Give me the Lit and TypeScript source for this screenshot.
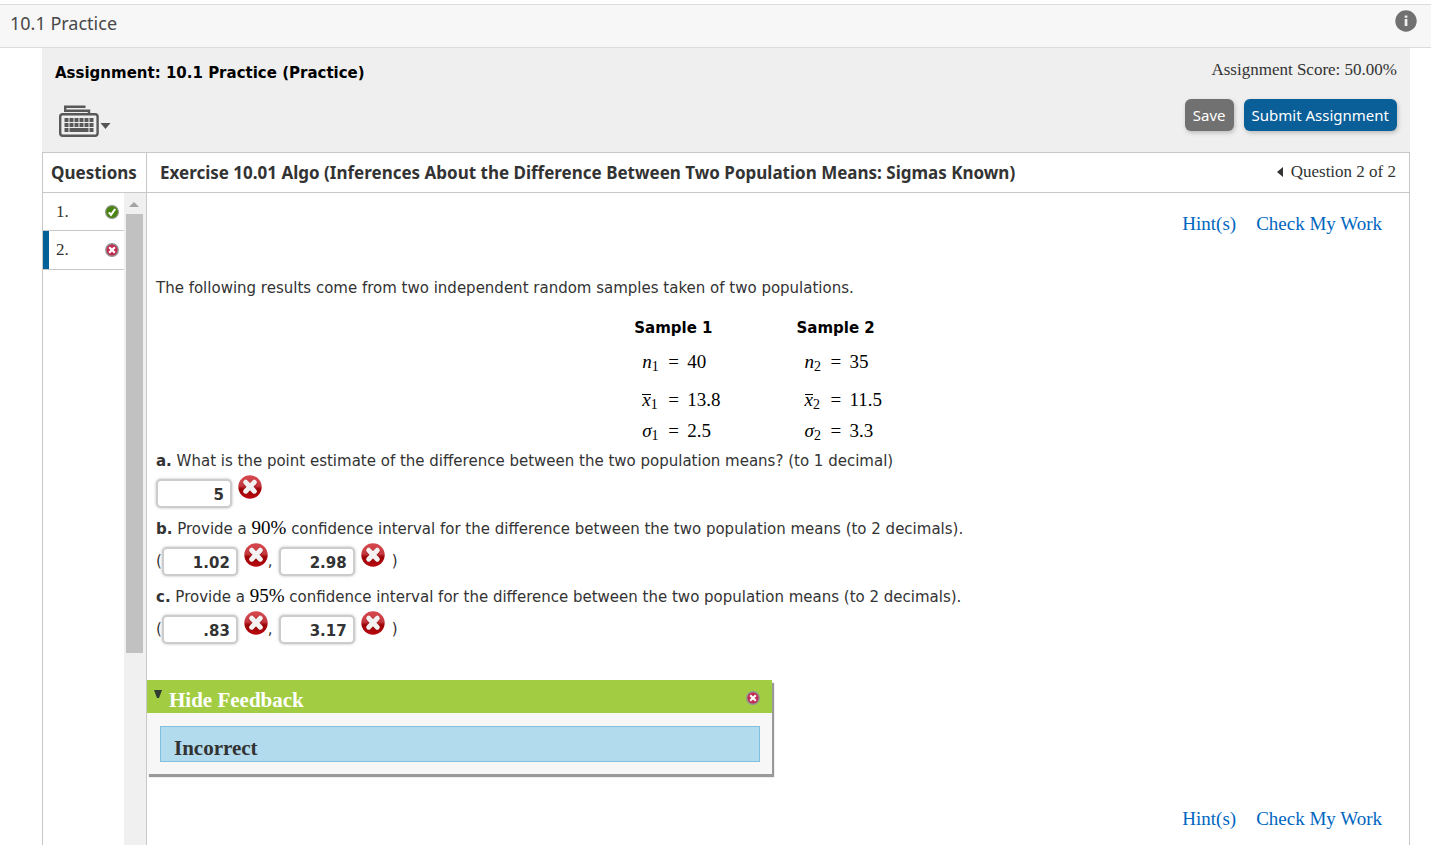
import { LitElement, html, css, svg } from "lit";
import { customElement, property } from "lit/decorators.js";

const SERIF = css`"Liberation Serif", "Times New Roman", serif`;
const SANS = css`"Open Sans", "Noto Sans", sans-serif`;
const TITLE = css`"Noto Sans", "Open Sans", sans-serif`;
const WIDE = css`Verdana, "DejaVu Sans", sans-serif`;

@customElement("status-mark")
class StatusMark extends LitElement {
  @property() kind = "wrong";
  static styles = css`
    :host { display: block; line-height: 0; }
    .small { width: 14px; height: 14px; }
    .large { width: 24px; height: 24px; }
  `;
  render() {
    if (this.kind === "right") {
      return html`<svg class="small" viewBox="0 0 14 14" role="img" aria-label="Correct">
        <circle cx="7" cy="7" r="6.4" fill="#4a8410" stroke="#8b9484" stroke-width="1.1" />
        <path d="M3.8 7.4 6 9.8 10.2 4" fill="none" stroke="#fff" stroke-width="2.1" />
      </svg>`;
    }
    if (this.kind === "small") {
      return html`<svg class="small" viewBox="0 0 14 14" role="img" aria-label="Incorrect">
        <circle cx="7" cy="7" r="6.2" fill="#c22c50" stroke="#929292" stroke-width="1.4" />
        <path d="M4.2 4.2l5.6 5.6M9.8 4.2l-5.6 5.6" stroke="#fff" stroke-width="2.2" />
      </svg>`;
    }
    return html`<svg class="large" viewBox="0 0 24 24" role="img" aria-label="Incorrect">
      <defs>
        <linearGradient id="g" x1="0" y1="0" x2="0" y2="1">
          <stop offset="0" stop-color="#d8484e" />
          <stop offset="0.45" stop-color="#c43a40" />
          <stop offset="0.58" stop-color="#9c0206" />
          <stop offset="1" stop-color="#b80a10" />
        </linearGradient>
      </defs>
      <circle cx="12" cy="12" r="11.7" fill="url(#g)" />
      <path d="M8 8l8 8M16 8l-8 8" stroke="#7d0206" stroke-opacity="0.35" stroke-width="6.4" stroke-linecap="round" />
      <path d="M7.7 7.2l8.6 9M16.3 7.2l-8.6 9" stroke="#f3f1f1" stroke-width="5" stroke-linecap="round" />
    </svg>`;
  }
}

@customElement("answer-box")
class AnswerBox extends LitElement {
  @property() value = "";
  @property() label = "";
  static styles = css`
    :host { display: flex; align-items: flex-start; gap: 6px; }
    .box {
      box-sizing: border-box;
      width: 76px;
      height: 29px;
      margin: 4px 0 0;
      padding: 2px 6px 0 4px;
      border: 2px solid #ccc;
      border-radius: 5px;
      box-shadow: 0 0 3px #bbb;
      background: #fff;
      color: #333;
      font: bold 15px ${WIDE};
      text-align: right;
    }
  `;
  render() {
    return html`<input class="box" type="text" aria-label=${this.label} .value=${this.value} />
      <status-mark kind="wrong"></status-mark>`;
  }
}

interface Stat { name: string; sub: string; value: string; bar?: boolean; }

@customElement("app-root")
class AppRoot extends LitElement {
  private rows: Stat[][] = [
    [{ name: "n", sub: "1", value: "40" }, { name: "n", sub: "2", value: "35" }],
    [{ name: "x", sub: "1", value: "13.8", bar: true }, { name: "x", sub: "2", value: "11.5", bar: true }],
    [{ name: "σ", sub: "1", value: "2.5" }, { name: "σ", sub: "2", value: "3.3" }],
  ];

  static styles = css`
    :host {
      display: flex;
      flex-direction: column;
      height: 100vh;
      overflow: hidden;
      background: #fff;
      color: #333;
      font-family: ${WIDE};
    }
    h1, h2, h3, p { margin: 0; font-weight: normal; }
    a { text-decoration: none; }
    .topbar {
      display: flex;
      flex: none;
      justify-content: space-between;
      align-items: flex-start;
      box-sizing: border-box;
      height: 44px;
      margin-top: 4px;
      padding: 5px 14px 0 10px;
      border: solid #dcdcdc;
      border-width: 1px 0;
      background: #f7f7f7;
    }
    .topbar h1 { font: 18px/26px ${TITLE}; color: #484848; }
    .info, .keys { padding: 0; border: 0; background: none; line-height: 0; }
    .info svg { width: 22px; height: 22px; }
    .panel {
      display: flex;
      flex: 1;
      flex-direction: column;
      min-height: 0;
      margin: 0 21px 0 42px;
    }
    .head {
      display: flex;
      flex: none;
      justify-content: space-between;
      box-sizing: border-box;
      height: 104px;
      padding: 12px 13px;
      background: #efefef;
    }
    .head h2 { font: bold 15px/26px ${WIDE}; color: #000; }
    .keys { display: flex; align-items: center; margin: 19px 0 0 4px; }
    .keys .board { width: 40px; height: 32px; }
    .keys .caret { width: 11px; height: 6px; margin: 9px 0 0 1px; }
    .side { display: flex; flex-direction: column; align-items: flex-end; gap: 19px; }
    .score { font: 17px/20px ${SERIF}; }
    .buttons { display: flex; gap: 10px; }
    .btn {
      height: 32px;
      padding: 0 8px;
      border: 0;
      border-radius: 6px;
      background: #0a5f99;
      box-shadow: 1px 2px 4px #bbb;
      color: #fff;
      font: 15px/32px ${TITLE};
    }
    .btn.grey { background: #717171; }
    .titles {
      display: flex;
      flex: none;
      box-sizing: border-box;
      height: 41px;
      border: 1px solid #c8c8c8;
    }
    .titles h3 { font: bold 17px/40px ${TITLE}; }
    .titles .qs { box-sizing: border-box; width: 104px; padding-left: 8px; border-right: 1px solid #c8c8c8; }
    .titles .name { flex: 1; padding-left: 13px; white-space: nowrap; }
    .pager { display: flex; align-items: center; gap: 8px; height: 38px; padding-right: 13px; font: 17px/38px ${SERIF}; }
    .pager button { padding: 0; border: 0; background: none; line-height: 0; }
    .pager svg { width: 6px; height: 10px; }
    .body { display: flex; flex: 1; min-height: 0; border: solid #c8c8c8; border-width: 0 1px; }
    .nav { display: flex; flex: none; box-sizing: border-box; width: 104px; border-right: 1px solid #c8c8c8; }
    .list { flex: 1; margin: 0; padding: 0; list-style: none; }
    .list a {
      display: flex;
      align-items: center;
      justify-content: space-between;
      box-sizing: border-box;
      height: 37px;
      padding: 0 5px 0 7px;
      border-left: 6px solid transparent;
      color: #333;
      font: 17px/38px ${SERIF};
    }
    .list li { border-bottom: 1px solid #c8c8c8; }
    .list .current { height: 38px; border-left-color: #006097; }
    .scroll { width: 22px; background: #f0f0f0; }
    .scroll svg { display: block; width: 10px; height: 5px; margin: 9px 0 7px 5px; }
    .thumb { width: 17px; height: 52vh; margin-left: 2px; background: #c1c1c1; }
    .content { flex: 1; min-width: 0; overflow: hidden; }
    .help { display: flex; justify-content: flex-end; gap: 20px; padding: 0 27px; font: 19px/24px ${SERIF}; }
    .help a { color: #0066bf; }
    .help.top { padding-top: 19px; }
    .help.bottom { padding-top: 33px; }
    .task { padding: 41px 9px 0; font-size: 15px; line-height: 22px; white-space: nowrap; }
    .data { margin: 18px auto 0; border-collapse: collapse; color: #000; }
    .data th { padding: 0 84px 0 0; text-align: left; font-size: 15px; line-height: 22px; }
    .data th + th { padding-right: 47px; }
    .data td { height: 31px; padding: 0 0 0 8px; font: 19px/31px ${SERIF}; vertical-align: bottom; }
    .data .tall td { height: 38px; }
    .stat { display: flex; }
    .sym { width: 26px; }
    .eq { width: 19px; }
    .sym i { display: inline-block; line-height: 10px; }
    .sym i.bar { border-top: 1px solid #000; }
    .sym small { display: inline-block; font-size: 14px; line-height: 8px; vertical-align: -3px; }
    .math { color: #000; font: 19px/20px ${SERIF}; }
    .part { height: 22px; margin-top: 4px; line-height: 22px; }
    .answers { display: flex; box-sizing: border-box; height: 42px; padding-top: 3px; }
    .answers .sign { padding-top: 7px; line-height: 22px; }
    .answers .sign + .next, .answers .next { margin-left: 6px; }
    .answers .close { padding-left: 7px; }
    .feedback {
      max-width: 625px;
      margin-top: 30px;
      background: #f7f7f7;
      box-shadow: 2px 3px 1px #999;
    }
    .bar-head {
      display: flex;
      align-items: center;
      box-sizing: border-box;
      height: 33px;
      padding: 2px 12px 0 7px;
      background: #a2cd42;
    }
    .toggle {
      display: flex;
      flex: 1;
      gap: 7px;
      padding: 5px 0 0;
      border: 0;
      background: none;
      color: #fff;
      font: bold 21px/26px ${SERIF};
      text-align: left;
    }
    .toggle svg { width: 8px; height: 8px; margin-top: 3px; }
    .result {
      margin: 0 12px 0 13px;
      padding: 8px 12px 0 13px;
      border: 1px solid #7fbfe0;
      background: #b2dbed;
      font: bold 21px/26px ${SERIF};
    }
    .bar-body { padding: 13px 0 12px; }
  `;

  private keyboard() {
    const keys = [];
    for (let r = 0; r < 3; r++) {
      for (let c = 0; c < 6; c++) {
        if (r === 2 && c > 0 && c < 5) continue;
        keys.push(svg`<rect x=${5.5 + c * 5} y=${13 + r * 5} width="4" height="4" />`);
      }
    }
    return html`<svg class="board" viewBox="0 0 40 32" fill="#595959" aria-hidden="true">
      <path d="M26.5 1.8H6.2V5.8H30V9" fill="none" stroke="#595959" stroke-width="2.4" />
      <rect x="1.2" y="9.2" width="37.4" height="21.6" rx="2.5" fill="none" stroke="#595959" stroke-width="2.4" />
      ${keys}
      <rect x="10.5" y="23" width="19" height="4" />
    </svg>`;
  }

  private stat(s: Stat) {
    return html`<td><span class="stat"><span class="sym"><i class=${s.bar ? "bar" : ""}>${s.name}</i><small>${s.sub}</small></span><span class="eq">=</span><span>${s.value}</span></span></td>`;
  }

  private interval(part: string, low: string, high: string) {
    return html`<div class="answers">
      <span class="sign">(</span>
      <answer-box value=${low} label="Part ${part}, lower limit"></answer-box>
      <span class="sign">,</span>
      <answer-box class="next" value=${high} label="Part ${part}, upper limit"></answer-box>
      <span class="sign close">)</span>
    </div>`;
  }

  private help(where: string) {
    return html`<div class="help ${where}"><a href="#hints">Hint(s)</a><a href="#check">Check My Work</a></div>`;
  }

  render() {
    return html`
      <header class="topbar">
        <h1>10.1 Practice</h1>
        <button class="info" aria-label="Information">
          <svg viewBox="0 0 22 22"><circle cx="11" cy="11" r="10.7" fill="#717171" /><path d="M9.7 5.5h2.7v2.2H9.7zM9.7 9h2.7v7H9.7z" fill="#f0f0f0" /></svg>
        </button>
      </header>
      <main class="panel">
        <section class="head">
          <div>
            <h2>Assignment: 10.1 Practice (Practice)</h2>
            <button class="keys" aria-label="Keyboard help">
              ${this.keyboard()}
              <svg class="caret" viewBox="0 0 11 6"><path d="M.5 0h10L5.5 6z" fill="#555" /></svg>
            </button>
          </div>
          <div class="side">
            <span class="score">Assignment Score: 50.00%</span>
            <div class="buttons">
              <button class="btn grey">Save</button>
              <button class="btn">Submit Assignment</button>
            </div>
          </div>
        </section>
        <div class="titles">
          <h3 class="qs">Questions</h3>
          <h3 class="name">Exercise 10.01 Algo (Inferences About the Difference Between Two Population Means: Sigmas Known)</h3>
          <div class="pager">
            <button aria-label="Previous question"><svg viewBox="0 0 6 10"><path d="M6 0v10L0 5z" fill="#333" /></svg></button>
            <span>Question 2 of 2</span>
          </div>
        </div>
        <div class="body">
          <nav class="nav">
            <ul class="list">
              <li><a href="#q1">1.<status-mark kind="right"></status-mark></a></li>
              <li><a class="current" href="#q2">2.<status-mark kind="small"></status-mark></a></li>
            </ul>
            <div class="scroll">
              <svg viewBox="0 0 10 5"><path d="M5 0l5 5H0z" fill="#a3a3a3" /></svg>
              <div class="thumb"></div>
            </div>
          </nav>
          <div class="content">
            ${this.help("top")}
            <div class="task">
              <p>The following results come from two independent random samples taken of two populations.</p>
              <table class="data">
                <thead><tr><th>Sample 1</th><th>Sample 2</th></tr></thead>
                <tbody>
                  ${this.rows.map((r, i) => html`<tr class=${i < 2 ? "tall" : ""}>${r.map((s) => this.stat(s))}</tr>`)}
                </tbody>
              </table>
              <p class="part"><b>a.</b> What is the point estimate of the difference between the two population means? (to 1 decimal)</p>
              <div class="answers"><answer-box value="5" label="Part a"></answer-box></div>
              <p class="part"><b>b.</b> Provide a <span class="math">90%</span> confidence interval for the difference between the two population means (to 2 decimals).</p>
              ${this.interval("b", "1.02", "2.98")}
              <p class="part"><b>c.</b> Provide a <span class="math">95%</span> confidence interval for the difference between the two population means (to 2 decimals).</p>
              ${this.interval("c", ".83", "3.17")}
            </div>
            <section class="feedback">
              <div class="bar-head">
                <button class="toggle"><svg viewBox="0 0 8 8"><path d="M0 0h8L5 8H3z" fill="#2f3b33" /></svg>Hide Feedback</button>
                <status-mark kind="small"></status-mark>
              </div>
              <div class="bar-body"><div class="result">Incorrect</div></div>
            </section>
            ${this.help("bottom")}
          </div>
        </div>
      </main>
    `;
  }
}
